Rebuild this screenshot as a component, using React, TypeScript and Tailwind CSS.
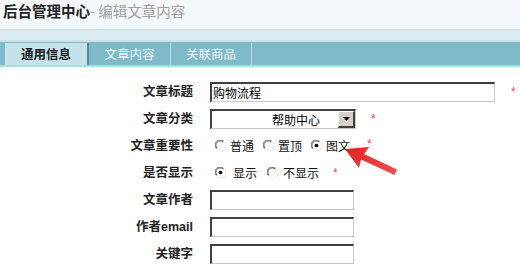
import React from "react";

const cjk = { fontFamily: '"Noto Sans CJK SC", "Liberation Sans", sans-serif' };

function Radio({ checked }: { checked?: boolean }) {
  return (
    <svg width="11" height="11" viewBox="0 0 12 12" className="shrink-0">
      <circle cx="6" cy="6" r="5.5" fill="#ffffff" />
      <path d="M1.5 9.5 A5.5 5.5 0 0 1 9.5 1.5" stroke="#808080" strokeWidth="1" fill="none" />
      <path d="M2.3 9 A4.5 4.5 0 0 1 9 2.3" stroke="#404040" strokeWidth="1" fill="none" />
      <path d="M10.5 2.5 A5.5 5.5 0 0 1 2.5 10.5" stroke="#e0e0e0" strokeWidth="1" fill="none" />
      {checked && <circle cx="6" cy="6" r="2" fill="#000" />}
    </svg>
  );
}

function Star() {
  return (
    <span className="text-[12px] leading-none text-[#ec4a5a]" style={{ fontFamily: '"Liberation Sans", sans-serif' }}>
      *
    </span>
  );
}

function Row({ label, children }: { label: React.ReactNode; children: React.ReactNode }) {
  return (
    <div className="flex h-[27px] items-center">
      <div className="w-[193px] text-right text-[12.5px] font-bold text-[#222]">{label}</div>
      <div className="ml-[17px] flex items-center">{children}</div>
    </div>
  );
}

function Input({ w, value }: { w: number; value?: string }) {
  return (
    <div
      className="h-[20px] border-t-2 border-l-2 border-r border-b border-t-[#404040] border-l-[#404040] border-r-[#c8c8c8] border-b-[#c8c8c8] bg-white pl-[1px] text-[12px] leading-[17px] text-black"
      style={{ width: w }}
    >
      {value}
    </div>
  );
}

export default function App() {
  return (
    <div className="relative h-[266px] w-[520px] overflow-hidden bg-white" style={cjk}>
      <div className="h-[25px] bg-[#f4f8fb] pl-[3px] pt-[1px] text-[14.5px] leading-[19px]">
        <span className="font-bold text-[#222]">后台管理中心</span>
        <span className="text-[#a0a0a0]">- 编辑文章内容</span>
      </div>
      <div className="h-[4px] bg-[#eef9f9]" />
      <div className="h-[1px] bg-[#c8d8d8]" />
      <div className="h-[10px] bg-[#deedf3]" />
      <div className="h-[2px] bg-[#c5e3e8]" />
      <div className="h-[1px] bg-[#8fb2bb]" />
      <div className="flex h-[22px] bg-[#7fbac9] text-[12.5px]">
        <div className="w-[5px]" />
        <div className="flex w-[84px] items-center justify-center border-r-2 border-r-[#4f8e9f] bg-[#c5e1ea] font-bold text-[#1a1a1a]">
          通用信息
        </div>
        <div className="flex w-[82px] items-center justify-center border-r border-r-[#b9dfe7] text-[#e8f4f8]">
          文章内容
        </div>
        <div className="flex w-[81px] items-center justify-center border-r border-r-[#b9dfe7] text-[#e8f4f8]">
          关联商品
        </div>
      </div>
      <div className="h-[2px] bg-[#a8dfe0]" />

      <div className="pt-[11px]">
        <Row label="文章标题">
          <Input w={285} value="购物流程" />
          <span className="ml-[16px] flex"><Star /></span>
        </Row>
        <Row label="文章分类">
          <div className="flex h-[20px] w-[146px] border-t-2 border-l-2 border-r border-b border-t-[#404040] border-l-[#404040] border-r-[#c8c8c8] border-b-[#c8c8c8] bg-white">
            <div className="flex-1 pl-[60px] text-[12px] leading-[17px] text-black">帮助中心</div>
            <div className="flex h-[17px] w-[17px] items-center justify-center border-t border-l border-r-2 border-b-2 border-t-white border-l-white border-r-[#404040] border-b-[#404040] bg-[#d4d0c8]">
              <svg width="7" height="4" viewBox="0 0 7 4"><path d="M0 0H7L3.5 4Z" fill="#000" /></svg>
            </div>
          </div>
          <span className="ml-[15px] flex"><Star /></span>
        </Row>
        <Row label="文章重要性">
          <div className="ml-[5px] flex items-center text-[12px] text-[#111]">
            <Radio />
            <span className="ml-[4px]">普通</span>
            <span className="ml-[9px] flex"><Radio /></span>
            <span className="ml-[4px]">置顶</span>
            <span className="ml-[9px] flex"><Radio checked /></span>
            <span className="ml-[4px]">图文</span>
            <span className="ml-[17px] flex -translate-y-[2px]"><Star /></span>
          </div>
        </Row>
        <Row label="是否显示">
          <div className="ml-[5px] flex items-center text-[12px] text-[#111]">
            <Radio checked />
            <span className="ml-[7px]">显示</span>
            <span className="ml-[10px] flex"><Radio /></span>
            <span className="ml-[5px]">不显示</span>
            <span className="ml-[14px] flex"><Star /></span>
          </div>
        </Row>
        <Row label="文章作者">
          <Input w={144} />
        </Row>
        <Row label={<span>作者<span style={{ fontFamily: '"Liberation Sans", sans-serif' }}>email</span></span>}>
          <Input w={144} />
        </Row>
        <Row label="关键字">
          <Input w={144} />
        </Row>
      </div>

      <svg className="pointer-events-none absolute left-0 top-0" width="520" height="266" viewBox="0 0 520 266">
        <defs>
          <linearGradient id="ar" x1="1" y1="1" x2="0" y2="0">
            <stop offset="0" stopColor="#f05050" />
            <stop offset="1" stopColor="#e82020" />
          </linearGradient>
        </defs>
        <path d="M345 149 L369 147 L364 154 L397 169.5 L394.5 175 L361 159.5 L359 168 Z" fill="url(#ar)" />
      </svg>
    </div>
  );
}
